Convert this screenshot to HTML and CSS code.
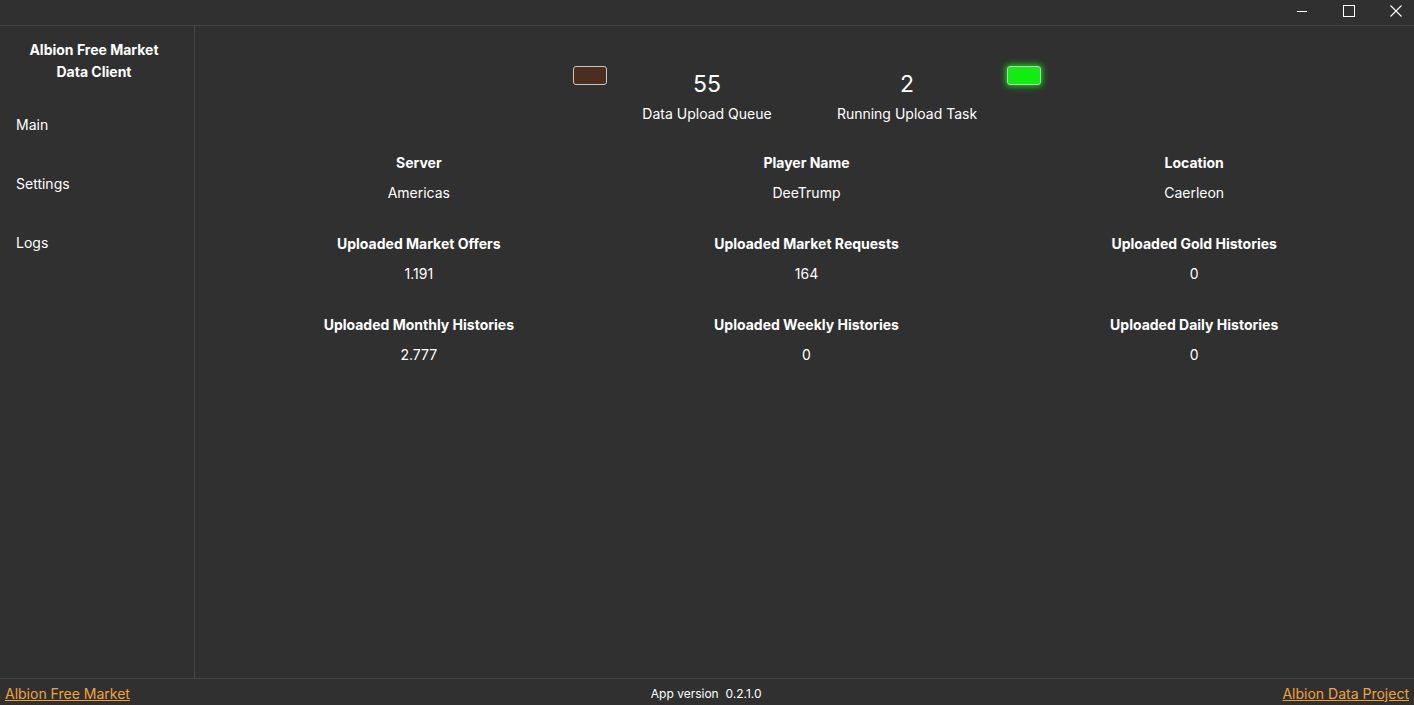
FILE: index.html
```html
<!DOCTYPE html>
<html lang="en">
<head>
    <meta charset="UTF-8">
    <title>Albion Free Market Data Client</title>
    <link rel="stylesheet" href="styles.css">
</head>
<body>
    <div class="window">
        <div class="titlebar">
            <span class="win-btn">
                <svg width="12" height="12" viewBox="0 0 12 12"><line x1="1" y1="6.5" x2="11" y2="6.5" stroke="#fff" stroke-width="1"/></svg>
            </span>
            <span class="win-btn">
                <svg width="12" height="12" viewBox="0 0 12 12"><rect x="0.5" y="0.5" width="11" height="11" fill="none" stroke="#fff" stroke-width="1"/></svg>
            </span>
            <span class="win-btn">
                <svg width="12" height="12" viewBox="0 0 12 12"><path d="M0.5 0.5 L11.5 11.5 M11.5 0.5 L0.5 11.5" stroke="#fff" stroke-width="1.1"/></svg>
            </span>
        </div>

        <div class="body">
            <div class="sidebar">
                <div class="app-title">Albion Free Market<br>Data Client</div>
                <ul class="nav">
                    <li>Main</li>
                    <li>Settings</li>
                    <li>Logs</li>
                </ul>
            </div>

            <div class="main">
                <div class="queue-row">
                    <div class="led led-off"></div>
                    <div class="queue">
                        <div class="queue-num">55</div>
                        <div class="queue-label">Data Upload Queue</div>
                    </div>
                    <div class="queue">
                        <div class="queue-num">2</div>
                        <div class="queue-label">Running Upload Task</div>
                    </div>
                    <div class="led led-on"></div>
                </div>

                <div class="stats">
                    <div class="stat"><div class="stat-name">Server</div><div class="stat-value">Americas</div></div>
                    <div class="stat"><div class="stat-name">Player Name</div><div class="stat-value">DeeTrump</div></div>
                    <div class="stat"><div class="stat-name">Location</div><div class="stat-value">Caerleon</div></div>
                    <div class="stat"><div class="stat-name">Uploaded Market Offers</div><div class="stat-value">1.191</div></div>
                    <div class="stat"><div class="stat-name">Uploaded Market Requests</div><div class="stat-value">164</div></div>
                    <div class="stat"><div class="stat-name">Uploaded Gold Histories</div><div class="stat-value">0</div></div>
                    <div class="stat"><div class="stat-name">Uploaded Monthly Histories</div><div class="stat-value">2.777</div></div>
                    <div class="stat"><div class="stat-name">Uploaded Weekly Histories</div><div class="stat-value">0</div></div>
                    <div class="stat"><div class="stat-name">Uploaded Daily Histories</div><div class="stat-value">0</div></div>
                </div>
            </div>
        </div>

        <div class="footer">
            <a href="#" class="link">Albion Free Market</a>
            <span class="version">App version&nbsp;&nbsp;0.2.1.0</span>
            <a href="#" class="link">Albion Data Project</a>
        </div>
    </div>
</body>
</html>
```

FILE: styles.css
```css
html, body {
    margin: 0;
    padding: 0;
    height: 100%;
}
body {
    font-family: Inter, "Noto Sans", sans-serif;
    background-color: #303030;
    color: #fff;
    font-size: 14px;
}
.window {
    display: flex;
    flex-direction: column;
    height: 705px;
}
.titlebar {
    height: 25px;
    border-bottom: 1px solid #464646;
    display: flex;
    justify-content: flex-end;
    align-items: flex-start;
    gap: 35px;
    padding-right: 12px;
}
.win-btn {
    width: 12px;
    height: 22px;
    display: flex;
    justify-content: center;
    align-items: center;
}
.body {
    flex: 1;
    display: flex;
    min-height: 0;
}
.sidebar {
    width: 194px;
    border-right: 1px solid #464646;
}
.app-title {
    font-weight: bold;
    text-align: center;
    line-height: 22px;
    padding: 13px 6px 0 0;
}
.nav {
    list-style: none;
    margin: 0;
    padding: 31px 0 0 16px;
}
.nav li {
    height: 59px;
    line-height: 22px;
}
.main {
    flex: 1;
    padding: 0 26px 0 30px;
}
.queue-row {
    display: flex;
    justify-content: center;
    align-items: flex-start;
    padding-top: 40px;
    margin-left: 1px;
}
.led {
    width: 32px;
    height: 17px;
    border: 1px solid #c6c6c6;
    border-radius: 3px;
}
.led-off {
    background-color: #4a2f1f;
}
.led-on {
    background-color: #10ee10;
    box-shadow: 0 0 6px 1px #18e018;
}
.queue {
    width: 200px;
    text-align: center;
}
.queue-num {
    font-size: 23px;
    line-height: 30px;
    margin-top: 3px;
}
.queue-label {
    line-height: 22px;
    margin-top: 4px;
}
.stats {
    display: grid;
    grid-template-columns: repeat(3, 1fr);
    row-gap: 29px;
    margin-top: 27px;
}
.stat {
    text-align: center;
    line-height: 22px;
}
.stat-name {
    font-weight: bold;
    margin-bottom: 8px;
}
.footer {
    height: 24px;
    border-top: 1px solid #464646;
    display: flex;
    justify-content: space-between;
    align-items: center;
    padding: 2px 5px 0;
}
.link {
    color: #f2a336;
    font-size: 14px;
}
.version {
    font-size: 12px;
}
```
